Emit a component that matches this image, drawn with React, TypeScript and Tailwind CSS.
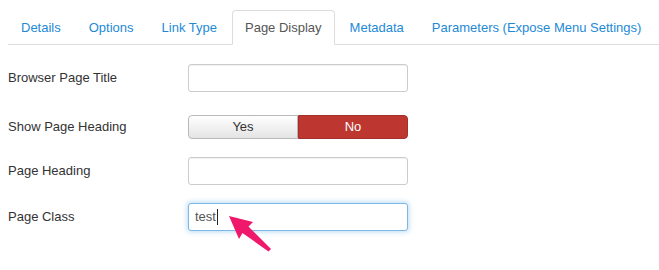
import React from "react";

const tabs = ["Details", "Options", "Link Type", "Page Display", "Metadata", "Parameters (Expose Menu Settings)"];

const TextInput = ({ value, focused }: { value?: string; focused?: boolean }) => (
  <div
    className={
      focused
        ? "flex h-[28px] w-[220px] items-center rounded-[3px] border border-[#7db8e6] bg-white px-[6px] shadow-[0_0_5px_1px_rgba(102,175,233,0.45)]"
        : "flex h-[28px] w-[220px] items-center rounded-[3px] border border-[#cccccc] bg-white px-[6px] shadow-[inset_0_1px_1px_rgba(0,0,0,0.06)]"
    }
  >
    {value && <span className="text-[13px] text-[#555]">{value}</span>}
    {focused && <span className="ml-[1px] h-[16px] w-[1px] bg-[#222]" />}
  </div>
);

const Row = ({ label, children, className }: { label: string; children: React.ReactNode; className?: string }) => (
  <div className={`flex items-center ${className ?? ""}`}>
    <div className="w-[180px] text-[13px] text-[#333]">{label}</div>
    {children}
  </div>
);

export default function App() {
  return (
    <div className="relative h-[270px] w-[659px] bg-white pl-[8px] pt-[10px] font-['Liberation_Sans',Arial,sans-serif]">
      <ul className="flex border-b border-[#dddddd]">
        {tabs.map((t) => {
          const active = t === "Page Display";
          return (
            <li key={t} className="-mb-px mr-[2px]">
              <div
                className={
                  active
                    ? "rounded-t-[4px] border border-[#dddddd] border-b-white bg-white px-[12px] py-[8px] text-[13px] leading-[17px] text-[#555]"
                    : "border border-transparent px-[12px] py-[8px] text-[13px] leading-[17px] text-[#1e8ad6]"
                }
              >
                {t}
              </div>
            </li>
          );
        })}
      </ul>

      <div className="flex flex-col">
        <Row label="Browser Page Title" className="mt-[19px]">
          <TextInput />
        </Row>
        <Row label="Show Page Heading" className="mt-[23px]">
          <div className="flex h-[24px] w-[220px] text-[13px]">
            <div className="flex w-[110px] items-center justify-center rounded-l-[4px] border border-[#b8b8b8] bg-gradient-to-b from-white to-[#e4e4e4] text-[#333]">
              Yes
            </div>
            <div className="flex w-[110px] items-center justify-center rounded-r-[4px] border border-[#a3302a] bg-[#bd362f] text-white">
              No
            </div>
          </div>
        </Row>
        <Row label="Page Heading" className="mt-[18px]">
          <TextInput />
        </Row>
        <Row label="Page Class" className="mt-[18px]">
          <TextInput value="test" focused />
        </Row>
      </div>

      <svg className="absolute left-0 top-0" width="659" height="270" viewBox="0 0 659 270">
        <polygon
          points="229,216 253,222 248.5,226.5 271,249 268.5,251.5 242.5,233 239,239"
          fill="#f0186a"
        />
      </svg>
    </div>
  );
}
